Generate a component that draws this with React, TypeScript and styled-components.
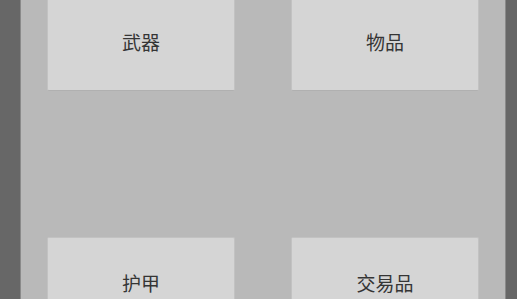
import React from 'react';
import styled, { createGlobalStyle } from 'styled-components';

const GlobalStyle = createGlobalStyle`
  html, body, #root {
    margin: 0;
    padding: 0;
    width: 100%;
    height: 100%;
    overflow: hidden;
  }
  body {
    background: #676767;
    font-family: Roboto, "Noto Sans CJK SC", sans-serif;
  }
`;

const Screen = styled.div`
  display: flex;
  width: 517px;
  height: 299px;
  background: #676767;
`;

const Side = styled.div<{ $w: number }>`
  flex: 0 0 ${(p) => p.$w}px;
  background: #676767;
`;

const Panel = styled.div`
  flex: 1;
  background: #b9b9b9;
  border-left: 1px solid #8a8a8a;
  border-right: 1px solid #8a8a8a;
  padding: 0 26px;
  overflow: hidden;
`;

const Grid = styled.div`
  display: grid;
  grid-template-columns: 188px 188px;
  grid-auto-rows: 95px;
  column-gap: 56px;
  row-gap: 146px;
  margin-top: -4px;
`;

const CategoryButton = styled.button`
  display: flex;
  align-items: center;
  justify-content: center;
  background: #d5d5d5;
  border: 1px solid #c2c2c2;
  border-bottom-color: #b0b0b0;
  border-radius: 2px;
  color: #353535;
  font-family: "Noto Sans CJK SC", sans-serif;
  font-size: 19px;
  padding: 0 0 4px 0;
  cursor: pointer;
`;

const categories = ['武器', '物品', '护甲', '交易品'];

export default function App() {
  return (
    <>
      <GlobalStyle />
      <Screen>
        <Side $w={20} />
        <Panel>
          <Grid>
            {categories.map((c) => (
              <CategoryButton key={c}>{c}</CategoryButton>
            ))}
          </Grid>
        </Panel>
        <Side $w={11} />
      </Screen>
    </>
  );
}
